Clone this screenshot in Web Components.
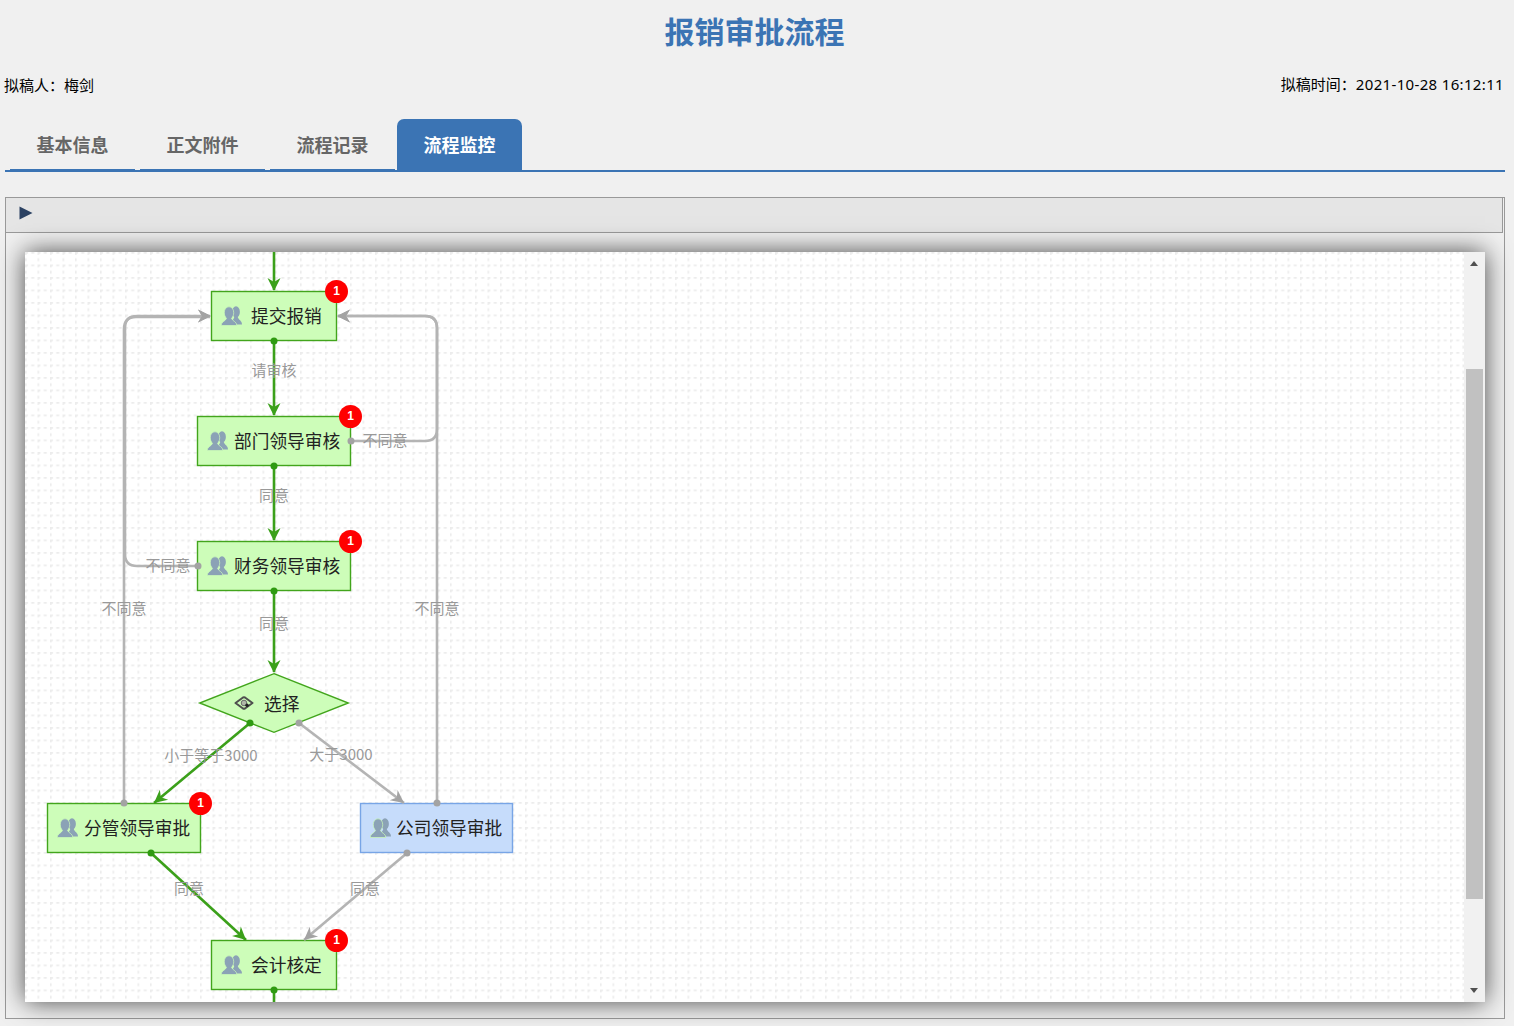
<!DOCTYPE html>
<html lang="zh-CN">
<head>
<meta charset="utf-8">
<title>报销审批流程</title>
<style>
html,body{margin:0;padding:0;background:#f0f0f0;overflow:hidden}
body{font-family:"Noto Sans CJK SC","Noto Sans",sans-serif;width:1514px;height:1026px}
</style>
</head>
<body>
<flow-page>
  <page-title>报销审批流程</page-title>
  <meta-row><span>拟稿人：梅剑</span><span slot="end">拟稿时间：<meta-num>2021-10-28 16:12:11</meta-num></span></meta-row>
  <tab-bar>
    <tab-item>基本信息</tab-item>
    <tab-item>正文附件</tab-item>
    <tab-item>流程记录</tab-item>
    <tab-item active>流程监控</tab-item>
  </tab-bar>
  <monitor-panel>
    <flow-canvas>
      <flow-node x="211" y="291" w="126" h="50" pl="10" gap="9" badge>提交报销</flow-node>
      <flow-node x="197" y="416" w="154" h="50" pl="10" gap="6" badge>部门领导审核</flow-node>
      <flow-node x="197" y="541" w="154" h="50" pl="10" gap="6" badge>财务领导审核</flow-node>
      <flow-node x="199" y="673" w="150" h="60" pl="35" gap="10" shape="diamond">选择</flow-node>
      <flow-node x="47" y="803" w="154" h="50" pl="10" gap="6" badge>分管领导审批</flow-node>
      <flow-node x="360" y="803" w="153" h="50" pl="10" gap="5" tone="blue">公司领导审批</flow-node>
      <flow-node x="211" y="940" w="126" h="50" pl="10" gap="9" badge>会计核定</flow-node>

      <flow-edge tone="gray" d="M351 441H425Q437 441 437 429V328Q437 316 425 316H338" tip="337,316,-1,0" dot="351,441"></flow-edge>
      <flow-edge tone="gray" d="M437 803V328Q437 316 425 316H338" tip="337,316,-1,0" dot="437,803"></flow-edge>
      <flow-edge tone="gray" d="M198 566H137Q125 566 125 554V328Q125 316 137 316H210" tip="211,316,1,0" dot="198,566"></flow-edge>
      <flow-edge tone="gray" d="M124 803V329Q124 317 136 317H210" tip="211,316,1,0" dot="124,803"></flow-edge>
      <flow-edge tone="gray" d="M299 723L404 803" tip="404,803,105,80" dot="299,723"></flow-edge>
      <flow-edge tone="gray" d="M407 853L304 940" tip="304,940,-103,87" dot="407,853"></flow-edge>
      <flow-edge tone="green" d="M274 252V290" tip="274,291,0,1"></flow-edge>
      <flow-edge tone="green" d="M274 341V415" tip="274,416,0,1" dot="274,341"></flow-edge>
      <flow-edge tone="green" d="M274 466V540" tip="274,541,0,1" dot="274,466"></flow-edge>
      <flow-edge tone="green" d="M274 591V672" tip="274,673,0,1" dot="274,591"></flow-edge>
      <flow-edge tone="green" d="M250 723L154 803" tip="154,803,-96,80" dot="250,723"></flow-edge>
      <flow-edge tone="green" d="M151 853L246 940" tip="246,940,95,87" dot="151,853"></flow-edge>
      <flow-edge tone="green" d="M274 990V1002" dot="274,990"></flow-edge>

      <flow-label cx="274" cy="369">请审核</flow-label>
      <flow-label cx="385" cy="439">不同意</flow-label>
      <flow-label cx="274" cy="494">同意</flow-label>
      <flow-label cx="168" cy="564">不同意</flow-label>
      <flow-label cx="124" cy="607">不同意</flow-label>
      <flow-label cx="437" cy="607">不同意</flow-label>
      <flow-label cx="274" cy="622">同意</flow-label>
      <flow-label cx="211" cy="754">小于等于3000</flow-label>
      <flow-label cx="341" cy="753">大于3000</flow-label>
      <flow-label cx="189" cy="887">同意</flow-label>
      <flow-label cx="365" cy="887">同意</flow-label>
    </flow-canvas>
  </monitor-panel>
</flow-page>

<script>
const CANVAS_X = 25, CANVAS_Y = 252;

function base(css, html) {
  return class extends HTMLElement {
    constructor() {
      super();
      this.attachShadow({mode: 'open'}).innerHTML = `<style>${css}</style>${html}`;
    }
  };
}

customElements.define('flow-page', base(
  `:host{display:flex;flex-direction:column;width:1514px;height:1026px;color:#000}`,
  `<slot></slot>`));

customElements.define('page-title', base(
  `:host{display:flex;align-items:center;justify-content:center;box-sizing:border-box;height:66px;padding:0 5px 6px 0;font-size:30px;font-weight:700;color:#3b74b4;line-height:1}`,
  `<slot></slot>`));

customElements.define('meta-row', base(
  `:host{display:flex;justify-content:space-between;align-items:center;box-sizing:border-box;height:38px;padding:0 10px 2px 4px;font-size:15px;line-height:1;margin-bottom:15px}`,
  `<slot></slot><slot name="end"></slot>`));

customElements.define('meta-num', base(
  `:host{display:inline;font-family:"Noto Sans",sans-serif;letter-spacing:.34px}`,
  `<slot></slot>`));

customElements.define('tab-bar', base(
  `:host{display:flex;align-items:flex-end;margin:0 9px 25px 5px;padding-left:5px;height:53px;box-shadow:inset 0 -2px 0 #3b74b4}`,
  `<slot></slot>`));

customElements.define('tab-item', base(
  `:host{display:flex;align-items:center;justify-content:center;box-sizing:border-box;width:125px;height:52px;margin:0 5px 1px 0;padding-bottom:1px;font-size:18px;font-weight:700;color:#666;border-bottom:2px solid #3b74b4;line-height:1}
   :host([active]){margin:0 0 1px -3px;background:#3b74b4;color:#fff;border-radius:7px 7px 0 0}`,
  `<slot></slot>`));

customElements.define('monitor-panel', base(
  `:host{display:block;box-sizing:border-box;width:1500px;height:822px;margin-left:5px;border:1px solid #999}
   .toolbar{display:flex;align-items:center;box-sizing:border-box;height:35px;margin-right:1px;padding:0 0 4px 13px;background:#e5e5e5;border-right:1px solid #999;border-bottom:1px solid #999}
   .body{padding:19px 19px 0}`,
  `<div class="toolbar"><svg width="14" height="14" viewBox="0 0 14 14"><path d="M0.5 .5L13.5 7L.5 13.5Z" fill="#2b4162"/></svg></div>
   <div class="body"><slot></slot></div>`));

customElements.define('flow-canvas', base(
  `:host{display:block;position:relative;width:1460px;height:750px;background:#fff;box-shadow:0 0 24px rgba(0,0,0,.7);overflow:hidden}
   .grid{position:absolute;left:0;top:0}
   .bar{position:absolute;right:0;top:0;width:21px;height:750px;background:#f1f1f1;z-index:5}
   .thumb{position:absolute;left:2px;top:117px;width:17px;height:530px;background:#c1c1c1}
   .arrow{position:absolute;left:6px;width:0;height:0;border-left:4.5px solid transparent;border-right:4.5px solid transparent}
   .up{top:9px;border-bottom:5px solid #505050}
   .down{bottom:9px;border-top:5px solid #505050}`,
  `<svg class="grid" width="1460" height="750">
     <defs><pattern id="g" width="12.5" height="12.5" patternUnits="userSpaceOnUse">
       <path d="M0 .8H12.5M.8 0V12.5" stroke="#ececec" stroke-width="1.6" stroke-dasharray="3 3.25" fill="none"/>
     </pattern></defs>
     <rect width="1460" height="750" fill="url(#g)"/>
   </svg>
   <slot></slot>
   <div class="bar"><div class="arrow up"></div><div class="thumb"></div><div class="arrow down"></div></div>`));

const PEOPLE = `<svg class="ic" width="21" height="20" viewBox="0 0 21 20">
  <g fill="#8ba2b6">
    <ellipse cx="15" cy="6" rx="3.9" ry="5.8"/>
    <path d="M10 18.5C10 15 12.5 14 13.3 11H16.7C17.5 14 21 14.5 21 18.4Z"/>
    <path d="M.2 19.5C.2 15.5 4.2 15.5 5.5 12.4C4 10.8 3.3 8.8 3.3 6.6C3.3 3.2 5.2 .8 8 .8C10.8 .8 12.7 3.2 12.7 6.6C12.7 8.8 12 10.8 10.5 12.4C11.8 15.5 15.8 15.5 15.8 19.5Z" stroke="#cdfdb9" stroke-width=".7"/>
  </g></svg>`;
const EYE = `<svg class="ic" width="20" height="14" viewBox="0 0 20 14">
  <path d="M1.5 7L9 1.5Q10 1 11 1.5L18.5 7L11 12.5Q10 13 9 12.5Z" fill="none" stroke="#4f4f4f" stroke-width="2" stroke-linejoin="round"/>
  <circle cx="10" cy="7" r="2.8" fill="#b0b8a8" stroke="#6a6a6a" stroke-width="1"/>
  <circle cx="13" cy="9.2" r="1.7" fill="#222"/></svg>`;

customElements.define('flow-node', class extends HTMLElement {
  constructor() { super(); this.attachShadow({mode: 'open'}); }
  connectedCallback() {
    const a = n => this.getAttribute(n);
    const [x, y, w, h] = ['x', 'y', 'w', 'h'].map(n => +a(n));
    const blue = a('tone') === 'blue', diamond = a('shape') === 'diamond';
    const fill = blue ? '#c6dcfb' : '#cdfdb9', stroke = blue ? '#78a5e6' : '#42a51c';
    const shape = diamond
      ? `<polygon points="${w/2},.7 ${w-.7},${h/2} ${w/2},${h-.7} .7,${h/2}" fill="${fill}" stroke="${stroke}" stroke-width="1.4"/>`
      : `<rect x=".5" y=".5" width="${w-1}" height="${h-1}" fill="${fill}" stroke="${stroke}" stroke-width="1.4"/>`;
    this.shadowRoot.innerHTML = `<style>
      :host{position:absolute;left:${x-CANVAS_X}px;top:${y-CANVAS_Y}px;width:${w}px;height:${h}px;display:flex;align-items:center;gap:${a('gap')}px;box-sizing:border-box;padding-left:${a('pl')}px;font-size:17.7px;color:#222;line-height:1;white-space:nowrap}
      .bg{position:absolute;left:0;top:0;overflow:visible}
      .ic{position:relative;flex:none}
      .t{position:relative;top:${diamond ? 1 : 0}px}
      .badge{position:absolute;right:-11px;top:-11.5px;width:23px;height:23px;border-radius:50%;background:#f00;color:#fff;font:700 12px/23px "Liberation Sans",sans-serif;text-align:center}
    </style><svg class="bg" width="${w}" height="${h}">${shape}</svg>${diamond ? EYE : PEOPLE}<span class="t"><slot></slot></span>${a('badge') !== null ? '<span class="badge">1</span>' : ''}`;
  }
});

customElements.define('flow-edge', class extends HTMLElement {
  constructor() { super(); this.attachShadow({mode: 'open'}); }
  connectedCallback() {
    const a = n => this.getAttribute(n);
    const green = a('tone') === 'green';
    const line = green ? '#3ba01a' : '#b4b4b4', mark = green ? '#3ba01a' : '#a3a3a3';
    let extra = '';
    if (a('tip')) {
      const [x, y, dx0, dy0] = a('tip').split(',').map(Number);
      const l = Math.hypot(dx0, dy0), dx = dx0 / l, dy = dy0 / l, nx = -dy, ny = dx;
      const p = (b, s) => `${x - dx * b + nx * s},${y - dy * b + ny * s}`;
      extra += `<polygon points="${x},${y} ${p(13, 6.5)} ${p(9, 0)} ${p(13, -6.5)}" fill="${mark}"/>`;
    }
    if (a('dot')) {
      const [x, y] = a('dot').split(',').map(Number);
      extra += `<circle cx="${x}" cy="${y}" r="3.5" fill="${green ? '#2f9a12' : '#a3a3a3'}"/>`;
    }
    this.shadowRoot.innerHTML = `<style>:host{position:absolute;left:0;top:0;width:1460px;height:750px;pointer-events:none}svg{display:block}</style>
      <svg width="1460" height="750" viewBox="${CANVAS_X} ${CANVAS_Y} 1460 750"><path d="${a('d')}" fill="none" stroke="${line}" stroke-width="2.6"/>${extra}</svg>`;
  }
});

customElements.define('flow-label', class extends HTMLElement {
  constructor() { super(); this.attachShadow({mode: 'open'}); }
  connectedCallback() {
    const x = +this.getAttribute('cx') - CANVAS_X, y = +this.getAttribute('cy') - CANVAS_Y;
    this.shadowRoot.innerHTML = `<style>:host{position:absolute;left:${x}px;top:${y}px;transform:translate(-50%,-50%);font-size:15px;line-height:1;color:#999;white-space:nowrap}</style><slot></slot>`;
  }
});
</script>
</body>
</html>
